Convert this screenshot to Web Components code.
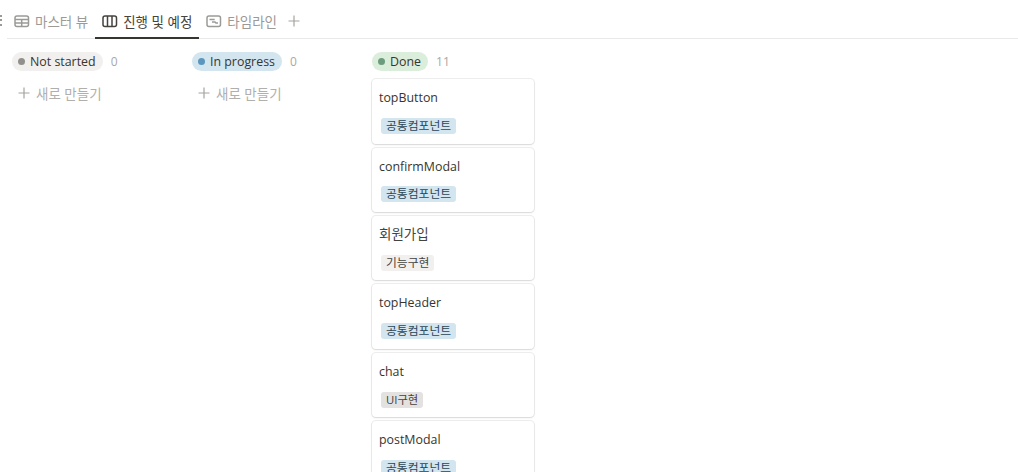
<!DOCTYPE html>
<html lang="ko">
<head>
<meta charset="utf-8">
<title>진행 및 예정</title>
<style>
  html, body { margin: 0; height: 100%; overflow: hidden; background: #fff; }
  body { font-family: "Open Sans", "Noto Sans CJK KR", sans-serif; color: #37352f; }
</style>
</head>
<body>
<board-view>
  <view-tab slot="tabs" icon="table">마스터 뷰</view-tab>
  <view-tab slot="tabs" icon="board" active>진행 및 예정</view-tab>
  <view-tab slot="tabs" icon="timeline">타임라인</view-tab>

  <board-column status="Not started" tone="gray" count="0" add></board-column>
  <board-column status="In progress" tone="blue" count="0" add></board-column>
  <board-column status="Done" tone="green" count="11">
    <task-card tag="공통컴포넌트" tone="blue">topButton</task-card>
    <task-card tag="공통컴포넌트" tone="blue">confirmModal</task-card>
    <task-card tag="기능구현" tone="light" hangul>회원가입</task-card>
    <task-card tag="공통컴포넌트" tone="blue">topHeader</task-card>
    <task-card tag="UI구현" tone="gray" tight>chat</task-card>
    <task-card tag="공통컴포넌트" tone="blue">postModal</task-card>
  </board-column>
</board-view>

<script>
const tabIcons = {
  table: '<rect x="1" y="2" width="13.5" height="10.5" rx="2"/><path d="M1 5.5h13.5M1 9h13.5M7.7 5.5v7"/>',
  board: '<rect x="1" y="2" width="13.5" height="10.5" rx="2"/><path d="M5.5 2v10.5M10 2v10.5"/>',
  timeline: '<rect x="1" y="2" width="13.5" height="10.5" rx="2"/><path d="M3.5 5.4h5.2M6 8h3l1 1h2"/>'
};

const viewTabTemplate = document.createElement('template');
viewTabTemplate.innerHTML = `
  <style>
    :host {
      display: flex;
      align-items: center;
      gap: 5px;
      height: 39px;
      padding: 3px 7px 0;
      box-sizing: border-box;
      font-size: 13.5px;
      color: #9b9a97;
      white-space: nowrap;
    }
    :host([active]) {
      color: #45433e;
      border-bottom: 2px solid #37352f;
      padding-top: 5px;
    }
    svg {
      width: 16px;
      height: 15px;
      fill: none;
      stroke: currentColor;
      stroke-width: 1.5;
    }
  </style>
  <svg viewBox="0 0 16 15"></svg>
  <slot></slot>
`;

class ViewTab extends HTMLElement {
  connectedCallback() {
    if (this.shadowRoot) return;
    this.attachShadow({ mode: 'open' });
    this.shadowRoot.appendChild(viewTabTemplate.content.cloneNode(true));
    this.shadowRoot.querySelector('svg').innerHTML = tabIcons[this.getAttribute('icon')];
  }
}

const statusTones = {
  gray: ['#f1f0ef', '#91908c'],
  blue: ['#d3e5ef', '#5b97bd'],
  green: ['#dbeddb', '#6c9b7d']
};

const boardColumnTemplate = document.createElement('template');
boardColumnTemplate.innerHTML = `
  <style>
    :host {
      display: block;
      width: 164px;
      flex: none;
    }
    .head {
      display: flex;
      align-items: center;
      gap: 8px;
      height: 39px;
      padding: 5px 0 0 1px;
      box-sizing: border-box;
    }
    .pill {
      display: flex;
      align-items: center;
      gap: 5px;
      height: 19px;
      padding: 0 7px 0 6px;
      border-radius: 10px;
      font-size: 12.4px;
      white-space: nowrap;
    }
    .dot {
      width: 7px;
      height: 7px;
      border-radius: 50%;
    }
    .count {
      font-size: 12px;
      color: #a9a8a5;
    }
    .cards {
      display: flex;
      flex-direction: column;
      padding: 1.2px 0 0 1px;
    }
    .add {
      display: none;
      align-items: center;
      gap: 6px;
      height: 28px;
      padding-left: 7px;
      font-size: 13.5px;
      color: #b0afac;
    }
    :host([add]) .add { display: flex; }
    .add svg {
      width: 12px;
      height: 12px;
      stroke: #a5a4a1;
      stroke-width: 1.2;
    }
  </style>
  <div class="head">
    <span class="pill"><span class="dot"></span><span class="label"></span></span>
    <span class="count"></span>
  </div>
  <div class="cards"><slot></slot></div>
  <div class="add">
    <svg viewBox="0 0 12 12"><path d="M6 .5v11M.5 6h11"/></svg>
    새로 만들기
  </div>
`;

class BoardColumn extends HTMLElement {
  connectedCallback() {
    if (this.shadowRoot) return;
    this.attachShadow({ mode: 'open' });
    this.shadowRoot.appendChild(boardColumnTemplate.content.cloneNode(true));
    const [bg, dot] = statusTones[this.getAttribute('tone')];
    const pill = this.shadowRoot.querySelector('.pill');
    pill.style.background = bg;
    this.shadowRoot.querySelector('.dot').style.background = dot;
    this.shadowRoot.querySelector('.label').textContent = this.getAttribute('status');
    this.shadowRoot.querySelector('.count').textContent = this.getAttribute('count');
  }
}

const tagTones = {
  blue: ['#d3e5ef', '#2b4557'],
  light: ['#f1f0ef', '#45433e'],
  gray: ['#e3e2e0', '#45433e']
};

const taskCardTemplate = document.createElement('template');
taskCardTemplate.innerHTML = `
  <style>
    :host {
      display: block;
      box-sizing: border-box;
      width: 162px;
      height: 64.4px;
      margin-bottom: 4px;
      padding: 10px 7px 0;
      background: #fff;
      border-radius: 4px;
      box-shadow: 0 0 0 1px rgba(15, 15, 15, .07), 0 1px 2px rgba(15, 15, 15, .1);
      flex: none;
    }
    .title {
      height: 18px;
      font-size: 12.4px;
      line-height: 18px;
      color: #37352f;
    }
    :host([hangul]) .title {
      font-size: 13.5px;
      line-height: 16px;
      color: #45433e;
    }
    .tag {
      display: inline-block;
      margin: 10.8px 0 0 2px;
      padding: 0 5px;
      height: 16px;
      line-height: 15px;
      border-radius: 3px;
      font-size: 11.8px;
      white-space: nowrap;
      vertical-align: top;
    }
    :host([tight]) .tag { font-size: 11.3px; }
  </style>
  <div class="title"><slot></slot></div>
  <span class="tag"></span>
`;

class TaskCard extends HTMLElement {
  connectedCallback() {
    if (this.shadowRoot) return;
    this.attachShadow({ mode: 'open' });
    this.shadowRoot.appendChild(taskCardTemplate.content.cloneNode(true));
    const tag = this.shadowRoot.querySelector('.tag');
    const [bg, color] = tagTones[this.getAttribute('tone')];
    tag.textContent = this.getAttribute('tag');
    tag.style.background = bg;
    tag.style.color = color;
  }
}

const boardViewTemplate = document.createElement('template');
boardViewTemplate.innerHTML = `
  <style>
    :host {
      display: block;
      height: 472px;
      overflow: hidden;
    }
    .bar {
      display: flex;
      align-items: flex-start;
      height: 39px;
      margin-left: 7px;
      box-sizing: border-box;
      border-bottom: 1px solid #e9e9e7;
    }
    .plus {
      display: flex;
      align-items: center;
      height: 38px;
      padding-top: 3px;
      box-sizing: border-box;
      margin-left: 4px;
      color: #a5a4a1;
    }
    .plus svg {
      width: 12px;
      height: 12px;
      stroke: currentColor;
      stroke-width: 1.2;
    }
    .grip {
      position: absolute;
      left: 0;
      top: 15px;
      width: 2px;
      height: 11px;
      background: repeating-linear-gradient(#9b9a97 0 2px, transparent 2px 4.5px);
    }
    .columns {
      display: flex;
      gap: 16px;
      padding-left: 11px;
    }
  </style>
  <span class="grip"></span>
  <div class="bar">
    <slot name="tabs"></slot>
    <span class="plus"><svg viewBox="0 0 12 12"><path d="M6 .5v11M.5 6h11"/></svg></span>
  </div>
  <div class="columns"><slot></slot></div>
`;

class BoardView extends HTMLElement {
  connectedCallback() {
    if (this.shadowRoot) return;
    this.attachShadow({ mode: 'open' });
    this.shadowRoot.appendChild(boardViewTemplate.content.cloneNode(true));
  }
}

customElements.define('view-tab', ViewTab);
customElements.define('board-column', BoardColumn);
customElements.define('task-card', TaskCard);
customElements.define('board-view', BoardView);
</script>
</body>
</html>
